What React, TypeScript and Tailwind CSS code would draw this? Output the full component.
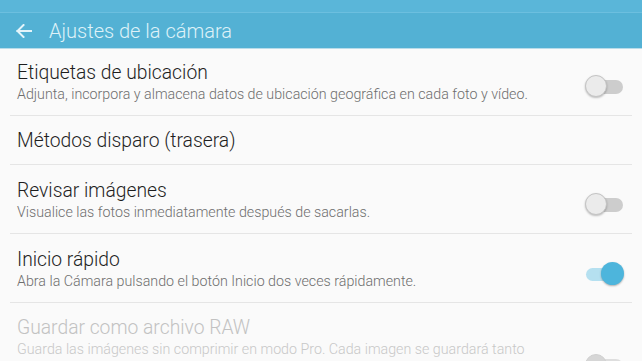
import React from "react";

type Item = {
	title: string;
	desc?: string;
	toggle?: "off" | "on" | "disabled";
	disabled?: boolean;
	rowClass: string;
};

const items: Item[] = [
	{
		title: "Etiquetas de ubicación",
		desc: "Adjunta, incorpora y almacena datos de ubicación geográfica en cada foto y vídeo.",
		toggle: "off",
		rowClass: "h-[67px] pt-[12px]",
	},
	{
		title: "Métodos disparo (trasera)",
		rowClass: "h-[49px] pt-[13px]",
	},
	{
		title: "Revisar imágenes",
		desc: "Visualice las fotos inmediatamente después de sacarlas.",
		toggle: "off",
		rowClass: "h-[69px] pt-[14px]",
	},
	{
		title: "Inicio rápido",
		desc: "Abra la Cámara pulsando el botón Inicio dos veces rápidamente.",
		toggle: "on",
		rowClass: "h-[69px] pt-[14px]",
	},
	{
		title: "Guardar como archivo RAW",
		desc: "Guarda las imágenes sin comprimir en modo Pro. Cada imagen se guardará tanto en formato RAW (DNG) como en formato JPEG. Las imágenes RAW ocupan más espacio.",
		toggle: "disabled",
		disabled: true,
		rowClass: "h-[116px] pt-[13px]",
	},
];

const Toggle = ({ state }: { state: "off" | "on" | "disabled" }) => {
	if (state === "on") {
		return (
			<div className="relative h-[23px] w-[39px] shrink-0">
				<div className="absolute left-[1px] right-[4px] top-[6px] h-[13px] rounded-full bg-[#b5e0f0]" />
				<div className="absolute right-0 top-0 h-[23px] w-[23px] rounded-full bg-[#4db5dc] shadow-[0_1px_2px_rgba(0,0,0,0.3)]" />
			</div>
		);
	}
	const dim = state === "disabled";
	return (
		<div className="relative h-[23px] w-[39px] shrink-0">
			<div
				className={`absolute left-[4px] right-[1px] top-[5px] h-[14px] rounded-full ${dim ? "bg-[#dedede]" : "bg-[#cdcdcd]"}`}
			/>
			<div
				className={`absolute left-0 top-0 h-[22px] w-[22px] rounded-full border ${dim ? "border-[#d0d0d0] bg-[#d6d6d6]" : "border-[#c4c4c4] bg-[#ebebeb] shadow-[0_1px_2px_rgba(0,0,0,0.25)]"}`}
			/>
		</div>
	);
};

export default function App() {
	return (
		<div className="h-[361px] w-[642px] overflow-hidden bg-[#fafafa] font-['Roboto',sans-serif]">
			{/* header */}
			<header className="flex h-[49px] flex-col border-b border-[#b9dcea] bg-[#53b1d4]">
				<div className="h-[13px] border-b border-[#6cbfdf] bg-[#5ab6d9]" />
				<div className="flex flex-1 items-center gap-[17px] pl-[16px]">
					<svg width="16" height="14" viewBox="0 0 16 14" fill="none" stroke="#e4f4fa" strokeWidth="2" strokeLinecap="square">
						<path d="M1.5 7h14" />
						<path d="M7.5 1 1.5 7l6 6" />
					</svg>
					<span className="text-[20px] font-light leading-none text-[#def1f8]">Ajustes de la cámara</span>
				</div>
			</header>

			<div className="mx-[10px]">
				{items.map((item) => (
					<div
						key={item.title}
						className={`flex border-b border-[#e5e5e5] pl-[7px] pr-[8px] ${item.rowClass}`}
					>
						<div className="min-w-0 w-[517px]">
							<div
								className={`text-[19.3px] font-light leading-[24px] ${item.disabled ? "text-[#c2c2c2]" : "text-[#1e1e1e]"}`}
							>
								{item.title}
							</div>
							{item.desc && (
								<div
									className={`text-[14.25px] font-light leading-[19px] ${item.disabled ? "text-[#c8c8c8]" : "text-[#6e6e6e]"}`}
								>
									{item.desc}
								</div>
							)}
						</div>
						{item.toggle && (
							<div className="ml-auto flex items-center self-stretch pb-[3px]">
								<Toggle state={item.toggle} />
							</div>
						)}
					</div>
				))}
			</div>
		</div>
	);
}
